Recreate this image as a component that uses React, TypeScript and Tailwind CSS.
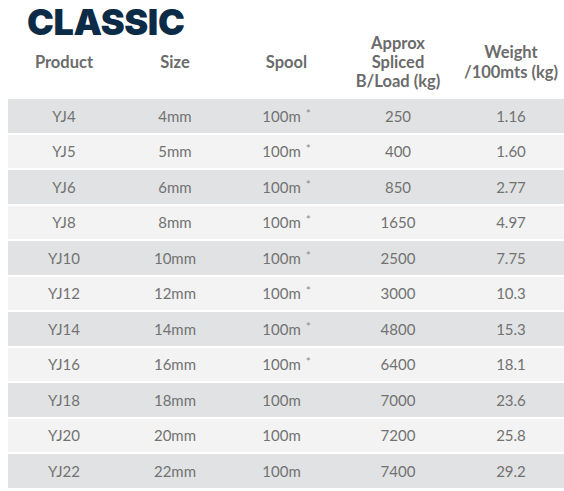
const rows = [
  { product: "YJ4", size: "4mm", star: true, load: "250", weight: "1.16" },
  { product: "YJ5", size: "5mm", star: true, load: "400", weight: "1.60" },
  { product: "YJ6", size: "6mm", star: true, load: "850", weight: "2.77" },
  { product: "YJ8", size: "8mm", star: true, load: "1650", weight: "4.97" },
  { product: "YJ10", size: "10mm", star: true, load: "2500", weight: "7.75" },
  { product: "YJ12", size: "12mm", star: true, load: "3000", weight: "10.3" },
  { product: "YJ14", size: "14mm", star: true, load: "4800", weight: "15.3" },
  { product: "YJ16", size: "16mm", star: true, load: "6400", weight: "18.1" },
  { product: "YJ18", size: "18mm", star: false, load: "7000", weight: "23.6" },
  { product: "YJ20", size: "20mm", star: false, load: "7200", weight: "25.8" },
  { product: "YJ22", size: "22mm", star: false, load: "7400", weight: "29.2" },
];

const cols = "grid grid-cols-[112px_110px_108px_120px_106px]";

export default function App() {
  return (
    <div className="w-[564px] h-[491px] bg-white pl-[8px] overflow-hidden font-['Lato',sans-serif]">
      {/* Title */}
      <h1 className="pl-[19px] pt-[11px] text-[36px] leading-[22px] font-black tracking-[-0.4px] text-[#0c2b46] font-['Inter',sans-serif]">
        CLASSIC
      </h1>

      {/* Header */}
      <div className={`${cols} h-[58px] items-center text-center text-[16.5px] leading-[19px] font-bold text-[#6b6b6b]`}>
        <div>Product</div>
        <div>Size</div>
        <div className="pl-[5px]">Spool</div>
        <div>
          Approx
          <br />
          Spliced
          <br />
          B/Load (kg)
        </div>
        <div className="leading-[20px]">
          Weight
          <br />
          /100mts (kg)
        </div>
      </div>

      {/* Body */}
      <div className="mt-[8px] flex flex-col gap-[2px]">
        {rows.map((r, i) => (
          <div
            key={r.product}
            className={`${cols} h-[33.5px] shrink-0 items-center text-center text-[15px] text-[#727272] ${
              i % 2 === 0 ? "bg-[#e1e2e3]" : "bg-[#f3f3f3]"
            }`}
          >
            <div>{r.product}</div>
            <div>{r.size}</div>
            <div className="pr-[5px]">
              <span className="relative">
                100m
                {r.star && (
                  <span className="absolute left-full top-[-2px] ml-[5px] text-[12px] text-[#8a8a8a]">*</span>
                )}
              </span>
            </div>
            <div>{r.load}</div>
            <div>{r.weight}</div>
          </div>
        ))}
      </div>
    </div>
  );
}
